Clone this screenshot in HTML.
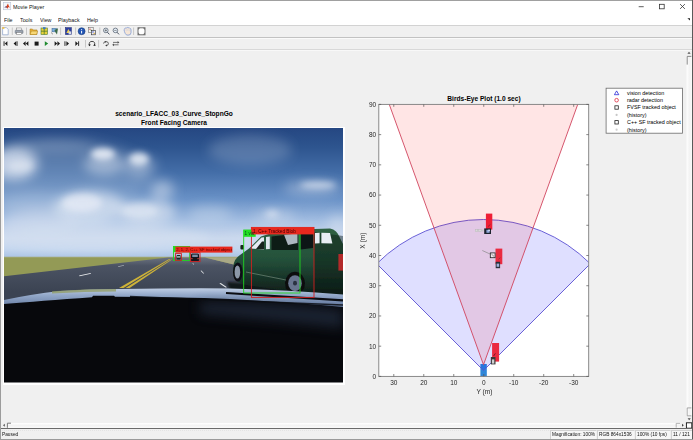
<!DOCTYPE html>
<html><head><meta charset="utf-8"><title>Movie Player</title>
<style>
html,body{margin:0;padding:0;background:#f0f0f0;}
body{width:693px;height:440px;overflow:hidden;position:relative;font-family:"Liberation Sans",sans-serif;color:#000;}
.abs{position:absolute;}
.t{position:absolute;white-space:nowrap;line-height:1;}
#win{position:absolute;left:0;top:0;width:693px;height:440px;background:#f0f0f0;overflow:hidden;}
#titlebar{left:0;top:0;width:693px;height:25px;background:#fff;}
.menu{font-size:6.2px;top:17.4px;color:#111;transform:scaleX(0.86);transform-origin:0 0;}
.tick{font-size:6px;color:#262626;}
.leg{font-size:5.4px;color:#000;left:627px;}
.st{font-size:5.6px;color:#111;top:431.6px;transform:scaleX(0.855);transform-origin:0 0;}
.sbx{position:absolute;top:430px;height:9px;border-left:1px solid #d2d2d2;border-top:1px solid #d2d2d2;background:#f6f6f6;box-sizing:border-box;}
.ttl{font-weight:bold;font-size:6.6px;color:#000;text-align:center;}
</style></head><body>
<div id="win">
<div class="abs" id="titlebar"></div>
<svg class="abs" style="left:3.4px;top:2.4px" width="8.6" height="8.6" viewBox="0 0 10 10"><rect x="0.5" y="0.5" width="8.5" height="8.5" fill="#f4f6fa" stroke="#b9c3d6" stroke-width="0.7"/><path d="M1.5 6.2 L4 4.8 L5.8 1.6 L6.8 4.6 L8.3 6.6 L6.4 5.8 L5 7.8 L3.8 6 Z" fill="#d6401f"/><path d="M1.5 6.2 L4 4.8 L4.6 6.4 Z" fill="#2b4fa8"/></svg>
<div class="t" style="left:13.2px;top:4px;font-size:6px;color:#111;transform:scaleX(0.9);transform-origin:0 0;">Movie Player</div>
<div class="t menu" style="left:4.3px;">File</div>
<div class="t menu" style="left:20.2px;">Tools</div>
<div class="t menu" style="left:40.2px;">View</div>
<div class="t menu" style="left:58.3px;">Playback</div>
<div class="t menu" style="left:87.2px;">Help</div>
<svg class="abs" style="left:610px;top:0" width="83" height="25" viewBox="0 0 83 25">
<path d="M28.7 6.7 H33.7" stroke="#333" stroke-width="0.8" fill="none"/>
<rect x="49.5" y="4.3" width="4.7" height="4.5" stroke="#333" stroke-width="0.8" fill="none"/>
<path d="M70.1 4.1 L74.9 8.9 M74.9 4.1 L70.1 8.9" stroke="#333" stroke-width="0.8" fill="none"/>
<path d="M77.4 18.2 L80 18.2 L80 20.6 Z" fill="#222"/>
</svg>
<div class="abs" style="left:0;top:25px;width:693px;height:1px;background:#d2d2d2;"></div>
<div class="abs" style="left:0;top:37px;width:693px;height:1px;background:#c2c2c2;"></div>
<div class="abs" style="left:0;top:38px;width:693px;height:1px;background:#fafafa;"></div>
<div class="abs" style="left:0;top:49px;width:693px;height:1px;background:#d8d8d8;"></div>
<div class="abs" style="left:0;top:50px;width:693px;height:1px;background:#f8f8f8;"></div>
<svg class="abs" style="left:0;top:26px" width="160" height="24" viewBox="0 26 160 24"><path d="M2.6 27.6 H6.4 L8.2 29.4 V34.8 H2.6 Z" fill="#fff" stroke="#8aa0c8" stroke-width="0.7"/><path d="M2.2 27.2 h2.2 v1.6 h-2.2z" fill="#f3c13a"/><path d="M12.3 27.5 V35" stroke="#bdbdbd" stroke-width="0.8"/><rect x="16.6" y="28" width="5" height="2.4" fill="#fff" stroke="#777" stroke-width="0.5"/><rect x="15.2" y="30.2" width="7.8" height="3.2" rx="0.6" fill="#9aa3b0" stroke="#5e6672" stroke-width="0.5"/><rect x="16.6" y="32.6" width="5" height="2" fill="#fff" stroke="#777" stroke-width="0.5"/><path d="M26.5 27.5 V35" stroke="#bdbdbd" stroke-width="0.8"/><path d="M30 29 h2.4 l0.8 0.9 h3.8 v4.6 h-7z" fill="#e9b23a" stroke="#a67a18" stroke-width="0.5"/><path d="M30 34.5 l1.3 -3.4 h6.4 l-1.2 3.4z" fill="#f7d775" stroke="#a67a18" stroke-width="0.5"/><rect x="41" y="28" width="6.4" height="6.4" fill="#e8d23a" stroke="#4a7a2a" stroke-width="0.6"/><path d="M44.2 28 V34.4 M41 31.2 H47.4" stroke="#3c6e2a" stroke-width="0.7"/><rect x="43" y="27.2" width="2.6" height="2" fill="#3a78c2"/><rect x="52" y="28.4" width="4.6" height="3.4" fill="#7fb0e0" stroke="#35618f" stroke-width="0.5"/><path d="M54.4 30 L58 28.2 L57 34.6 L55.6 32.4 Z" fill="#3d6a48"/><path d="M51 32.5 l2 1.8" stroke="#555" stroke-width="0.6"/><path d="M60.6 27.5 V35" stroke="#bdbdbd" stroke-width="0.8"/><rect x="65.4" y="27.6" width="6" height="7" fill="#2b3fa0" stroke="#1b2670" stroke-width="0.5"/><path d="M66.4 33 L68.4 29 L70.6 33 Z" fill="#f1d04a"/><rect x="68.6" y="31.4" width="2.6" height="3" fill="#d9dde8"/><path d="M75.6 27.5 V35" stroke="#bdbdbd" stroke-width="0.8"/><circle cx="81.6" cy="31.2" r="3.5" fill="#2457b5" stroke="#12336f" stroke-width="0.5"/><path d="M81.6 29.2 v0.8 M81.6 30.8 v2.6" stroke="#fff" stroke-width="1"/><rect x="88.6" y="27.6" width="4.6" height="5" fill="#f4f4f4" stroke="#555" stroke-width="0.5"/><rect x="89.4" y="28.6" width="1.2" height="1.2" fill="#d43a3a"/><rect x="90.8" y="29.8" width="1.2" height="1.2" fill="#3aa03a"/><rect x="91.4" y="30.4" width="4.2" height="4.4" fill="#e9e9f2" stroke="#333" stroke-width="0.6"/><rect x="92.4" y="31.4" width="1.2" height="1.2" fill="#3a55c8"/><rect x="93.6" y="32.8" width="1.2" height="1.2" fill="#e0b030"/><path d="M99.8 27.5 V35" stroke="#bdbdbd" stroke-width="0.8"/><circle cx="105.8" cy="30.4" r="2.3" fill="#e8f2fb" stroke="#4b5563" stroke-width="0.7"/><path d="M107.4 32.2 L109.4 34.4" stroke="#4b5563" stroke-width="1"/><path d="M104.6 30.4 h2.4 M105.8 29.2 v2.4" stroke="#333" stroke-width="0.5"/><circle cx="115.4" cy="30.4" r="2.3" fill="#e8f2fb" stroke="#4b5563" stroke-width="0.7"/><path d="M117 32.2 L119 34.4" stroke="#4b5563" stroke-width="1"/><path d="M114.2 30.4 h2.4" stroke="#333" stroke-width="0.5"/><path d="M124.4 31.4 q-1 -2.4 0.4 -2.6 q0.4 -1.4 1.6 -0.8 q0.8 -1 1.8 -0.2 q1.2 -0.6 1.6 0.6 q1.2 0 1.2 1.4 v2.8 q0 2.6 -3 2.6 q-2.2 0 -2.8 -1.8 z" fill="#f6e6d6" stroke="#7f9bd6" stroke-width="0.8"/><path d="M126.2 29.2 v2 M127.8 28.8 v2.2 M129.4 29.4 v1.8" stroke="#b9c6e6" stroke-width="0.4"/><path d="M133.6 27.5 V35" stroke="#bdbdbd" stroke-width="0.8"/><rect x="138" y="27.8" width="7" height="7" fill="#fff" stroke="#6e6e6e" stroke-width="1"/><path d="M138 27.8 h2.2 l-2.2 2.2z M145 27.8 h-2.2 l2.2 2.2z M138 34.8 h2.2 l-2.2 -2.2z M145 34.8 h-2.2 l2.2 -2.2z" fill="#6e6e6e"/><rect x="3.6" y="41.300000000000004" width="0.9" height="4.6" fill="#1a1a1a"/><path d="M7.4 41.300000000000004 L4.800000000000001 43.6 L7.4 45.9 Z" fill="#1a1a1a"/><path d="M16.2 41.300000000000004 L13.6 43.6 L16.2 45.9 Z" fill="#1a1a1a"/><rect x="16.6" y="41.300000000000004" width="0.9" height="4.6" fill="#1a1a1a"/><path d="M25.6 41.300000000000004 L23.0 43.6 L25.6 45.9 Z" fill="#1a1a1a"/><path d="M28.4 41.300000000000004 L25.799999999999997 43.6 L28.4 45.9 Z" fill="#1a1a1a"/><rect x="34.6" y="41.6" width="4" height="4" fill="#1a1a1a"/><path d="M44.8 41.2 L48.199999999999996 43.6 L44.8 46.0 Z" fill="#1e8a2e"/><path d="M54.6 41.300000000000004 L57.2 43.6 L54.6 45.9 Z" fill="#1a1a1a"/><path d="M57.4 41.300000000000004 L60.0 43.6 L57.4 45.9 Z" fill="#1a1a1a"/><rect x="64.5" y="41.300000000000004" width="0.9" height="4.6" fill="#1a1a1a"/><path d="M66.4 41.300000000000004 L69.0 43.6 L66.4 45.9 Z" fill="#1a1a1a"/><path d="M75.4 41.300000000000004 L78.0 43.6 L75.4 45.9 Z" fill="#1a1a1a"/><rect x="78.2" y="41.300000000000004" width="0.9" height="4.6" fill="#1a1a1a"/><path d="M85.5 40 V47.5" stroke="#bdbdbd" stroke-width="0.8"/><path d="M89.4 45.4 q-0.8 -4 2.6 -4 q3.4 0 2.6 4" fill="none" stroke="#1a1a1a" stroke-width="0.8"/><path d="M88.2 44.4 h2.6 l-1.3 1.8z M93.2 45.8 h2.6 l-1.3 -1.8z" fill="#1a1a1a"/><path d="M98.6 40 V47.5" stroke="#bdbdbd" stroke-width="0.8"/><path d="M103.6 43.6 q0 -2 2.4 -2 q2.4 0 2.4 2 q0 2 -2.4 2" fill="none" stroke="#444" stroke-width="0.8"/><path d="M104.8 41 l1.6 0.8 l-1.4 1z M107 46.4 l-1.8 -0.8 l1.6 -1z" fill="#333"/><path d="M113 42.4 h5.6 M113 44.8 h5.6" stroke="#555" stroke-width="0.8"/><path d="M117.6 41 l1.8 1.4 l-1.8 1.4z M114 43.4 l-1.8 1.4 l1.8 1.4z" fill="#555"/></svg>
<div class="t ttl" style="left:74px;width:200px;top:110.6px;">scenario_LFACC_03_Curve_StopnGo</div>
<div class="t ttl" style="left:74px;width:200px;top:119.6px;">Front Facing Camera</div>
<div class="abs" style="left:3px;top:127px;width:342px;height:257.5px;background:#fff;"></div>
<svg class="abs" style="left:4px;top:128px" width="339" height="254.5" viewBox="4 128 339 254.5">
<defs>
<linearGradient id="sky" x1="0" y1="0" x2="0" y2="1">
<stop offset="0" stop-color="#254782"/><stop offset="0.15" stop-color="#2e558f"/><stop offset="0.35" stop-color="#456fa9"/><stop offset="0.55" stop-color="#6a92c7"/><stop offset="0.72" stop-color="#a6c0e3"/><stop offset="0.85" stop-color="#c2d3ec"/><stop offset="0.93" stop-color="#bdd2ee"/><stop offset="1" stop-color="#a8c2e4"/>
</linearGradient>
<linearGradient id="dash" x1="0" y1="0" x2="0" y2="1"><stop offset="0" stop-color="#1b2230"/><stop offset="0.5" stop-color="#0b0d14"/><stop offset="1" stop-color="#060709"/></linearGradient>
<linearGradient id="hood" gradientUnits="userSpaceOnUse" x1="0" y1="288" x2="0" y2="306"><stop offset="0" stop-color="#c2d0e6"/><stop offset="0.4" stop-color="#93a8c9"/><stop offset="1" stop-color="#6a80a6"/></linearGradient>
<linearGradient id="suvg" gradientUnits="userSpaceOnUse" x1="0" y1="230" x2="0" y2="296"><stop offset="0" stop-color="#2e6042"/><stop offset="0.45" stop-color="#24503a"/><stop offset="0.75" stop-color="#173227"/><stop offset="1" stop-color="#0d1a16"/></linearGradient>
<linearGradient id="road" gradientUnits="userSpaceOnUse" x1="0" y1="257" x2="0" y2="292"><stop offset="0" stop-color="#6d7482"/><stop offset="0.25" stop-color="#4b5363"/><stop offset="1" stop-color="#3b4352"/></linearGradient>
<filter id="b6" x="-50%" y="-50%" width="200%" height="200%"><feGaussianBlur stdDeviation="6"/></filter>
<filter id="b3" x="-50%" y="-50%" width="200%" height="200%"><feGaussianBlur stdDeviation="3.2"/></filter>
<filter id="b1" x="-50%" y="-50%" width="200%" height="200%"><feGaussianBlur stdDeviation="1.2"/></filter>
<filter id="b05" x="-20%" y="-20%" width="140%" height="140%"><feGaussianBlur stdDeviation="0.5"/></filter>
<clipPath id="vc"><rect x="4" y="128" width="339" height="254.5"/></clipPath>
</defs>
<g clip-path="url(#vc)">
<rect x="4" y="128" width="339" height="130" fill="url(#sky)"/>
<!-- clouds -->
<g filter="url(#b6)" fill="#dbe4f1">
<ellipse cx="14" cy="164" rx="24" ry="16" opacity="0.8"/>
<ellipse cx="36" cy="206" rx="40" ry="13" opacity="0.25"/>
<ellipse cx="104" cy="164" rx="20" ry="11" opacity="0.5"/>
<ellipse cx="140" cy="166" rx="16" ry="10" opacity="0.4"/>
<ellipse cx="162" cy="190" rx="12" ry="10" opacity="0.55"/>
<ellipse cx="90" cy="207" rx="36" ry="16" opacity="0.75"/>
<ellipse cx="146" cy="212" rx="30" ry="12" opacity="0.7"/>
<ellipse cx="40" cy="222" rx="40" ry="10" opacity="0.5"/>
<ellipse cx="90" cy="238" rx="120" ry="14" opacity="0.6"/>
<ellipse cx="250" cy="150" rx="42" ry="15" opacity="0.22"/>
<ellipse cx="270" cy="240" rx="90" ry="10" opacity="0.4"/>
<ellipse cx="338" cy="226" rx="10" ry="10" opacity="0.55"/>
<ellipse cx="50" cy="146" rx="45" ry="6" opacity="0.2"/>
<ellipse cx="60" cy="176" rx="90" ry="38" opacity="0.2"/>
<ellipse cx="312" cy="188" rx="28" ry="7" opacity="0.4"/>
<ellipse cx="210" cy="214" rx="22" ry="8" opacity="0.35"/>
<ellipse cx="275" cy="217" rx="20" ry="7" opacity="0.4"/>
</g>
<g filter="url(#b3)" fill="#e8edf6">
<ellipse cx="103" cy="154" rx="12" ry="6" opacity="0.9"/>
<ellipse cx="139" cy="159" rx="10" ry="6.5" opacity="0.85"/>
<ellipse cx="82" cy="203" rx="20" ry="9" opacity="0.7"/>
<ellipse cx="140" cy="211" rx="18" ry="7" opacity="0.55"/>
<ellipse cx="318" cy="185" rx="18" ry="3.5" opacity="0.65"/>
<ellipse cx="272" cy="214" rx="7" ry="4" opacity="0.55"/>
<ellipse cx="20" cy="166" rx="12" ry="6" opacity="0.5"/>
</g>
<!-- ground -->
<rect x="4" y="257" width="339" height="50" fill="#939a56"/>
<rect x="4" y="256.6" width="339" height="0.9" fill="#a9b08a" opacity="0.8"/>
<!-- road -->
<path d="M4 276.2 L120 263 L168 257.6 L205 257.6 L240 266 L343 292 L343 310 L4 310 Z" fill="url(#road)"/>
<path d="M205 257.4 L343 257.4 L343 292 L240 266 Z" fill="#a9a986"/>
<!-- lane markings -->
<path d="M119 288 L169.2 259 L170.6 259 L123.5 288 Z" fill="#cdb238"/>
<path d="M125.5 288 L171 259.6 L172 259.6 L129.6 288 Z" fill="#cdb238"/>
<path d="M79 275.4 L90.6 273 L91 273.7 L79.6 276.2 Z" fill="#e6e8ea"/>
<path d="M118 266.2 L124 265.2 L124 265.8 L118.3 266.8 Z" fill="#c9ccd0"/>
<path d="M200.6 270.8 L203.2 273.6 L204.2 273.4 L201.4 270.6 Z" fill="#e6e8ea"/>
<path d="M219.4 283.4 L225.6 287.6 L227 287.2 L220.8 283 Z" fill="#e6e8ea"/>
<path d="M192.4 263.2 L193.6 264.8 L194.2 264.7 L193 263.1 Z" fill="#d0d3d6"/>
<!-- far cars -->
<rect x="176.6" y="255" width="4" height="4.6" rx="0.8" fill="#1e2420"/>
<rect x="177" y="256.2" width="3.2" height="1.4" fill="#b8c4cc"/>
<rect x="191" y="253.6" width="8" height="7.6" rx="1.2" fill="#14161c"/>
<rect x="192.2" y="254.6" width="5.6" height="2.4" fill="#7d8ca6"/>
<rect x="191.2" y="258" width="1.4" height="1.2" fill="#c03030"/><rect x="197.4" y="258" width="1.4" height="1.2" fill="#c03030"/>
<!-- SUV shadow -->
<path d="M227 282 L343 288 L343 301 L232 296.5 Z" fill="#101318" opacity="0.92" filter="url(#b1)"/>
<!-- SUV -->
<g filter="url(#b05)">
<path d="M233.4 266 Q234 259 240 255 L249 248.5 L261 236.5 Q275 231 300 229.6 L330 228.6 Q337 230 340 238 L343 244 L343 296 L300 293 L246 285 L236.6 281 Q233 278 233.4 270 Z" fill="url(#suvg)"/>
<path d="M314 232 L343 236 L343 300 L314 296 Z" fill="#0c1a14" opacity="0.45"/>
<path d="M250.5 248.6 L261.5 237.6 L264 237.2 L264 249.4 Z" fill="#e4eaf2"/>
<path d="M256 249 L262 241.4 L264 241.4 L264 249.3 Z" fill="#18201f"/>
<path d="M266 237 L269.8 236.6 L269.8 249 L266 249.2 Z" fill="#dfe6ee"/>
<path d="M271.5 236.4 L298 233.6 L298 250 L271.5 250 Z" fill="#101a18"/>
<path d="M284 234.8 L297.5 233.6 L297.5 243 L288 245 Z" fill="#c9d3df" opacity="0.85"/>
<path d="M300.5 233.4 L313 232.6 L313 248 L300.5 249.6 Z" fill="#0f1716"/>
<path d="M315 233 L319.6 232.8 L319.6 243.2 L315 243.4 Z" fill="#e8edf3"/>
<path d="M321.4 232.8 L330 233 L332.4 243.4 L321.4 243.2 Z" fill="#e8edf3"/>
<rect x="338.4" y="254" width="4.6" height="16.6" fill="#b32a2a"/>
<rect x="240.4" y="245" width="3.6" height="4.4" rx="1" fill="#16281f"/>
<ellipse cx="237.8" cy="272" rx="4.8" ry="9.4" fill="#0d1012"/>
<ellipse cx="237.4" cy="272" rx="2.8" ry="6.6" fill="#8c98a8"/>
<ellipse cx="295" cy="283.2" rx="10" ry="11.4" fill="#0b0d10"/>
<ellipse cx="295" cy="283.2" rx="6.8" ry="8" fill="#69758f"/>
<ellipse cx="295" cy="283.2" rx="2" ry="2.4" fill="#2a3040"/>
<path d="M246 272 L286 280" stroke="#6f8a78" stroke-width="0.7" fill="none"/>
</g>
<!-- hood of ego car -->
<path d="M4 300 Q30 294.4 60 291 Q90 289.2 120 289 Q180 288 230 288.4 Q290 290 343 294.6 L343 312 L4 312 Z" fill="url(#hood)"/>
<path d="M52 291.2 Q85 289 116 289 L116 291.6 Q84 291.8 52 293.4 Z" fill="#8f9a5a" opacity="0.7"/>
<path d="M4 304 Q40 301 92 297.2 L93 295.8 L114 295.8 L115 296.8 Q180 297 230 299 Q290 302 343 307 L343 382.5 L4 382.5 Z" fill="#07080c"/>
<path d="M200 302 Q270 301 343 310 L343 328 Q270 320 200 314 Z" fill="#2a3850" opacity="0.55" filter="url(#b6)"/>
<path d="M226 293 L343 300.4" stroke="#0b0d12" stroke-width="2.2" fill="none"/>
<path d="M130 296.4 L343 305" stroke="#0b0d12" stroke-width="1.3" fill="none" opacity="0.85"/>
<!-- detection boxes -->
<g fill="none" stroke-width="0.9">
<rect x="243.7" y="230" width="56.3" height="63" stroke="#21d521"/>
<rect x="251.4" y="227.4" width="62.6" height="70" stroke="#d02020"/>
<rect x="173.5" y="246.5" width="16.2" height="14" stroke="#21d521"/>
<rect x="175.4" y="253.6" width="6" height="6.8" stroke="#d02020"/>
<rect x="190.4" y="252.6" width="9.6" height="9" stroke="#d02020"/>
</g>
<rect x="243.7" y="230" width="12" height="6.8" fill="#21e021"/>
<rect x="251.4" y="227.2" width="62.6" height="7.2" fill="#e8281e"/>
<rect x="173.5" y="246.4" width="16.2" height="5.8" fill="#21e021"/>
<rect x="175.4" y="246.6" width="57" height="6" fill="#e8281e"/>

<text x="244.6" y="235.4" font-family="Liberation Sans, sans-serif" font-size="4.6" fill="#042">1 vis</text>
<text x="253" y="232.9" font-family="Liberation Sans, sans-serif" font-size="4.7" fill="#400">1, C++ Tracked Blob</text>

<text x="176.2" y="251.4" font-family="Liberation Sans, sans-serif" font-size="4.2" fill="#500">2, 1, 2, C++ SF tracked object</text>
</g>
</svg>
<div class="t ttl" style="left:384px;width:200px;top:96.2px;">Birds-Eye Plot (1.0 sec)</div>
<svg class="abs" style="left:340px;top:80px" width="353" height="330" viewBox="340 80 353 330">
<defs><clipPath id="ac"><rect x="378.8" y="104.4" width="209.90000000000003" height="272.0"/></clipPath></defs>
<rect x="378.8" y="104.4" width="209.90000000000003" height="272.0" fill="#fff"/>
<rect x="480.4" y="364" width="6.4" height="12.4" fill="#2f86d8"/>
<g clip-path="url(#ac)">
<path d="M483.5 370.5 L376.73 263.73 A151.0 151.0 0 0 1 590.27 263.73 Z" fill="#0000ff" fill-opacity="0.125" stroke="#5a50d2" stroke-width="0.9" stroke-linejoin="round"/>
<path d="M483.5 364.7 L306.50 -124.25 L660.50 -124.25 Z" fill="#ff0000" fill-opacity="0.10" stroke="#d0445e" stroke-width="0.9" stroke-linejoin="round"/>
</g>
<g>
<rect x="475.2" y="229.4" width="2.6" height="2.4" fill="#d9d9d9" stroke="#b5b5b5" stroke-width="0.4"/>
<rect x="478.6" y="229.4" width="2.6" height="2.4" fill="#d9d9d9" stroke="#b5b5b5" stroke-width="0.4"/>
<rect x="481.6" y="229.6" width="2" height="2" fill="#c9c9c9"/>
<rect x="485.9" y="213.6" width="6.4" height="16" fill="#ee1f36"/>
<rect x="484.2" y="228.4" width="6.8" height="5.6" fill="#1d2430"/>
<rect x="486.4" y="229.8" width="3.2" height="3" fill="#8fa6d8"/>
<rect x="488.4" y="229.6" width="1.4" height="1.6" fill="#e8eefc"/>
<path d="M488 226.6 l2.4 -2.2" stroke="#5a2030" stroke-width="0.6"/>
<rect x="495.5" y="248.6" width="6.8" height="15.6" fill="#ea2a40"/>
<path d="M482.3 250.5 L490.4 254.2" stroke="#8a8a8a" stroke-width="0.7"/>
<rect x="490.3" y="252.9" width="4.8" height="4.8" fill="#f1e6ee" stroke="#222" stroke-width="0.8"/>
<path d="M491.4 254 l2.6 2.4" stroke="#555" stroke-width="0.6"/>
<rect x="495.7" y="261.8" width="4.4" height="6.4" fill="#2a2f3a"/>
<rect x="496.6" y="263.6" width="2.6" height="3.2" fill="#9fb2dc"/>
<path d="M498.6 259.4 l1.6 -1.8" stroke="#60303a" stroke-width="0.6"/>
<rect x="492.1" y="343" width="7" height="18.6" fill="#ea2a40"/>
<rect x="490.8" y="357" width="4.7" height="7.4" fill="#3a3a3a"/>
<rect x="491.9" y="359.4" width="2.4" height="4.2" fill="#cfcfcf"/>
<path d="M493.6 356 l1.8 -2.6" stroke="#40161e" stroke-width="0.7"/>
</g>
<rect x="378.8" y="104.4" width="209.90000000000003" height="272.0" fill="none" stroke="#7d7d7d" stroke-width="0.9"/><path d="M393.79 376.4 v-2.4 M393.79 104.4 v2.4 M423.78 376.4 v-2.4 M423.78 104.4 v2.4 M453.76 376.4 v-2.4 M453.76 104.4 v2.4 M483.75 376.4 v-2.4 M483.75 104.4 v2.4 M513.74 376.4 v-2.4 M513.74 104.4 v2.4 M543.72 376.4 v-2.4 M543.72 104.4 v2.4 M573.71 376.4 v-2.4 M573.71 104.4 v2.4 M378.8 376.40 h2.4 M588.7 376.40 h-2.4 M378.8 346.18 h2.4 M588.7 346.18 h-2.4 M378.8 315.96 h2.4 M588.7 315.96 h-2.4 M378.8 285.73 h2.4 M588.7 285.73 h-2.4 M378.8 255.51 h2.4 M588.7 255.51 h-2.4 M378.8 225.29 h2.4 M588.7 225.29 h-2.4 M378.8 195.07 h2.4 M588.7 195.07 h-2.4 M378.8 164.84 h2.4 M588.7 164.84 h-2.4 M378.8 134.62 h2.4 M588.7 134.62 h-2.4 M378.8 104.40 h2.4 M588.7 104.40 h-2.4 " stroke="#555" stroke-width="0.7" fill="none"/>
<text x="393.8" y="385" text-anchor="middle" font-family="Liberation Sans, sans-serif" font-size="6.5" fill="#262626">30</text><text x="423.8" y="385" text-anchor="middle" font-family="Liberation Sans, sans-serif" font-size="6.5" fill="#262626">20</text><text x="453.8" y="385" text-anchor="middle" font-family="Liberation Sans, sans-serif" font-size="6.5" fill="#262626">10</text><text x="483.8" y="385" text-anchor="middle" font-family="Liberation Sans, sans-serif" font-size="6.5" fill="#262626">0</text><text x="513.7" y="385" text-anchor="middle" font-family="Liberation Sans, sans-serif" font-size="6.5" fill="#262626">-10</text><text x="543.7" y="385" text-anchor="middle" font-family="Liberation Sans, sans-serif" font-size="6.5" fill="#262626">-20</text><text x="573.7" y="385" text-anchor="middle" font-family="Liberation Sans, sans-serif" font-size="6.5" fill="#262626">-30</text><text x="376.2" y="378.8" text-anchor="end" font-family="Liberation Sans, sans-serif" font-size="6.5" fill="#262626">0</text><text x="376.2" y="348.5" text-anchor="end" font-family="Liberation Sans, sans-serif" font-size="6.5" fill="#262626">10</text><text x="376.2" y="318.3" text-anchor="end" font-family="Liberation Sans, sans-serif" font-size="6.5" fill="#262626">20</text><text x="376.2" y="288.1" text-anchor="end" font-family="Liberation Sans, sans-serif" font-size="6.5" fill="#262626">30</text><text x="376.2" y="257.9" text-anchor="end" font-family="Liberation Sans, sans-serif" font-size="6.5" fill="#262626">40</text><text x="376.2" y="227.6" text-anchor="end" font-family="Liberation Sans, sans-serif" font-size="6.5" fill="#262626">50</text><text x="376.2" y="197.4" text-anchor="end" font-family="Liberation Sans, sans-serif" font-size="6.5" fill="#262626">60</text><text x="376.2" y="167.2" text-anchor="end" font-family="Liberation Sans, sans-serif" font-size="6.5" fill="#262626">70</text><text x="376.2" y="137.0" text-anchor="end" font-family="Liberation Sans, sans-serif" font-size="6.5" fill="#262626">80</text><text x="376.2" y="106.7" text-anchor="end" font-family="Liberation Sans, sans-serif" font-size="6.5" fill="#262626">90</text>
<text x="484.4" y="393.8" text-anchor="middle" font-family="Liberation Sans, sans-serif" font-size="6.6" fill="#262626">Y (m)</text>
<text transform="translate(365.2 240.6) rotate(-90)" text-anchor="middle" font-family="Liberation Sans, sans-serif" font-size="6.6" fill="#262626">X (m)</text>
<rect x="606.1" y="88.2" width="76.4" height="45" fill="#fff" stroke="#6a6a6a" stroke-width="0.8"/>
<path d="M616.6 90.9 L618.8000000000001 94.7 L614.4 94.7 Z" fill="none" stroke="#2a2ad8" stroke-width="0.8"/><circle cx="616.6" cy="100.2" r="1.8" fill="none" stroke="#e0283c" stroke-width="0.8"/><rect x="614.9" y="105.8" width="3.4" height="3.4" fill="none" stroke="#222" stroke-width="0.8"/><circle cx="616.6" cy="114.9" r="1.1" fill="#c6c6c6"/><rect x="614.9" y="120.6" width="3.4" height="3.4" fill="none" stroke="#222" stroke-width="0.8"/><circle cx="616.6" cy="129.7" r="1.1" fill="#cecece"/>
<text x="627" y="94.9" font-family="Liberation Sans, sans-serif" font-size="5.4" fill="#000">vision detection</text><text x="627" y="102.1" font-family="Liberation Sans, sans-serif" font-size="5.4" fill="#000">radar detection</text><text x="627" y="109.4" font-family="Liberation Sans, sans-serif" font-size="5.4" fill="#000">FVSF tracked object</text><text x="627" y="116.8" font-family="Liberation Sans, sans-serif" font-size="5.4" fill="#000">(history)</text><text x="627" y="124.2" font-family="Liberation Sans, sans-serif" font-size="5.4" fill="#000">C++ SF tracked object</text><text x="627" y="131.6" font-family="Liberation Sans, sans-serif" font-size="5.4" fill="#000">(history)</text>
</svg>
<svg class="abs" style="left:0;top:50px" width="693" height="390" viewBox="0 50 693 390">
<defs><linearGradient id="vth" x1="0" y1="0" x2="1" y2="0"><stop offset="0" stop-color="#ffffff"/><stop offset="0.5" stop-color="#f3f3f3"/><stop offset="1" stop-color="#fafafa"/></linearGradient>
<linearGradient id="hth" x1="0" y1="0" x2="0" y2="1"><stop offset="0" stop-color="#ffffff"/><stop offset="0.5" stop-color="#f3f3f3"/><stop offset="1" stop-color="#fafafa"/></linearGradient></defs>
<rect x="686.6" y="56" width="5.4" height="360" fill="url(#vth)"/>
<rect x="7" y="423" width="673" height="5" fill="url(#hth)"/>
<path d="M687.4 53.8 L689 51.8 L690.6 53.8 Z" fill="#555"/>
<path d="M687.2 64.6 V56.4 H691.4" fill="none" stroke="#6e6e6e" stroke-width="0.8"/>
<path d="M691.4 407.9 H687.2 V415.8 H691.4" fill="none" stroke="#8a8a8a" stroke-width="0.7"/>
<path d="M687.6 418.2 L689.2 420.2 L690.8 418.2 Z" fill="#555"/>
<path d="M4.8 423.8 L3 425.3 L4.8 426.8 Z" fill="#555"/>
<path d="M7.4 427.8 V423.2 H11" fill="none" stroke="#5a5a5a" stroke-width="0.8"/>
<path d="M676.2 423.4 V427.6 M676.2 423.4 H680" fill="none" stroke="#9a9a9a" stroke-width="0.7"/>
<path d="M682 423.8 L683.8 425.3 L682 426.8 Z" fill="#444"/>
<rect x="686.4" y="422.8" width="5.4" height="5.4" fill="#fff" stroke="#111" stroke-width="0.9"/>
<rect x="0" y="428" width="693" height="1" fill="#6a6a6a"/>
<path d="M0 430.5 H693" stroke="#dcdcdc" stroke-width="0.6" stroke-dasharray="1 1"/>
</svg>
<div class="t st" style="left:1.6px;">Paused</div>
<div class="sbx" style="left:549.6px;width:46.8px;"></div><div class="t st" style="left:551.6px;">Magnification: 100%</div>
<div class="sbx" style="left:597.4px;width:36.4px;"></div><div class="t st" style="left:599.4px;">RGB 864x1536</div>
<div class="sbx" style="left:634.6px;width:35px;"></div><div class="t st" style="left:637.4px;">100% (10 fps)</div>
<div class="sbx" style="left:671.4px;width:21px;"></div><div class="t st" style="left:672.6px;">11 / 121</div>
<div class="abs" style="left:0;top:0;width:693px;height:1px;background:#a0a0a0;"></div>
<div class="abs" style="left:0;top:0;width:1px;height:440px;background:#9c9c9c;"></div>
<div class="abs" style="left:692px;top:0;width:1px;height:440px;background:#5a5a5a;"></div>
<div class="abs" style="left:0;top:439px;width:693px;height:1px;background:#9a9a9a;"></div>
</div>
</body></html>
